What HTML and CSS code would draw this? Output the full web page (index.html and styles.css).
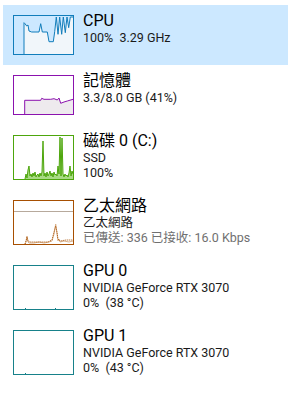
FILE: index.html
```html
<!DOCTYPE html>
<html>
<head>
    <title>Performance</title>
    <link rel="stylesheet" href="styles.css">
</head>
<body>
    <div class="list">
        <div class="item selected">
            <div class="graph cpu">
                <svg viewBox="0 0 59 38" preserveAspectRatio="none">
                    <polygon class="fill" points="10,38 10,6.7 11,7.7 12.7,10 14,9 15,15 17.7,16 25,16 26.7,7.7 28.3,16 33.3,16 35,25.7 39.3,25.7 40.7,15.7 42.3,1 44,18.3 45.7,1 47.7,18.3 49.3,1 51.3,16.7 53,1 54.7,11.7 56.3,1 59,1 59,38"/>
                    <polyline class="line" points="10,38 10,6.7 11,7.7 12.7,10 14,9 15,15 17.7,16 25,16 26.7,7.7 28.3,16 33.3,16 35,25.7 39.3,25.7 40.7,15.7 42.3,1 44,18.3 45.7,1 47.7,18.3 49.3,1 51.3,16.7 53,1 54.7,11.7 56.3,1 59,1"/>
                </svg>
            </div>
            <div class="info">
                <div class="title">CPU</div>
                <div class="sub">100%&nbsp; 3.29 GHz</div>
            </div>
        </div>

        <div class="item">
            <div class="graph mem">
                <svg viewBox="0 0 59 38" preserveAspectRatio="none">
                    <polygon class="fill" points="10.7,38 10.7,24.3 26.7,24.3 27.7,22.3 30,23.3 36.7,23.3 40,22.7 43.3,24 45,22 46.7,27.3 50,26 53.3,25 59,23.3 59,38"/>
                    <polyline class="line" points="10.7,38 10.7,24.3 26.7,24.3 27.7,22.3 30,23.3 36.7,23.3 40,22.7 43.3,24 45,22 46.7,27.3 50,26 53.3,25 59,23.3"/>
                </svg>
            </div>
            <div class="info">
                <div class="title">記憶體</div>
                <div class="sub">3.3/8.0 GB (41%)</div>
            </div>
        </div>

        <div class="item tall">
            <div class="graph disk">
                <svg viewBox="0 0 59 43" preserveAspectRatio="none">
                    <polygon class="fill" points="11,43 12,38 13,42 14,34 15,30 16,40 17,38 18,41 19,37 20,40 21,36 22,41 23,39 24,38 25,41 26,37 27,40 28,36 29,5 30,40 31,37 32,41 33,36 34,40 35,38 36,35 37,40 38,37 39,41 40,36 41,39 42,38 43,40 44,30 45,38 46,1 47,40 48,2 49,38 50,41 51,38 52,40 53,39 54,41 55,37 56,30 57,40 58,35 59,38 59,43"/>
                    <polyline class="line" points="11,43 12,38 13,42 14,34 15,30 16,40 17,38 18,41 19,37 20,40 21,36 22,41 23,39 24,38 25,41 26,37 27,40 28,36 29,5 30,40 31,37 32,41 33,36 34,40 35,38 36,35 37,40 38,37 39,41 40,36 41,39 42,38 43,40 44,30 45,38 46,1 47,40 48,2 49,38 50,41 51,38 52,40 53,39 54,41 55,37 56,30 57,40 58,35 59,38"/>
                </svg>
            </div>
            <div class="info">
                <div class="title">磁碟 0 (C:)</div>
                <div class="sub">SSD</div>
                <div class="sub">100%</div>
            </div>
        </div>

        <div class="item tall">
            <div class="graph net">
                <svg viewBox="0 0 59 43" preserveAspectRatio="none">
                    <line class="scale" x1="0" y1="10.5" x2="59" y2="10.5"/>
                    <polyline class="line" points="11,43 12,41 13,35 14,41 15,42 20,42 25,41 30,42 35,41 38,40 40,33 41.7,23 43,33 44,40 45,38 46,41 50,40 55,41 59,40"/>
                    <polyline class="dots" points="11,43 12,40 13,36 14,40 16,41 22,41 28,41 34,41 38,39 40,31 41.7,25 43,31 44,38 46,40 52,39 59,39"/>
                </svg>
            </div>
            <div class="info">
                <div class="title">乙太網路</div>
                <div class="sub">乙太網路</div>
                <div class="sub muted">已傳送: 336 已接收: 16.0 Kbps</div>
            </div>
        </div>

        <div class="item tall">
            <div class="graph gpu">
                <svg viewBox="0 0 59 43" preserveAspectRatio="none">
                    <line class="line" x1="11.5" y1="42" x2="11.5" y2="43"/>
                    <line class="line" x1="41.5" y1="42" x2="41.5" y2="43"/>
                </svg>
            </div>
            <div class="info">
                <div class="title">GPU 0</div>
                <div class="sub">NVIDIA GeForce RTX 3070</div>
                <div class="sub">0%&nbsp; (38 °C)</div>
            </div>
        </div>

        <div class="item tall">
            <div class="graph gpu">
                <svg viewBox="0 0 59 43" preserveAspectRatio="none">
                    <line class="line" x1="11.5" y1="42" x2="11.5" y2="43"/>
                </svg>
            </div>
            <div class="info">
                <div class="title">GPU 1</div>
                <div class="sub">NVIDIA GeForce RTX 3070</div>
                <div class="sub">0%&nbsp; (43 °C)</div>
            </div>
        </div>
    </div>
</body>
</html>
```
FILE: styles.css
```css
body { margin: 0; background: #fff; font-family: Roboto, "Noto Sans CJK TC", sans-serif; color: #1a1a1a; }
.list { padding: 5px 0 0 3px; }
.item { display: flex; align-items: flex-start; padding: 10px 0 10px 10px; }
.item.selected { background: #cce8ff; }
.graph { width: 59px; height: 38px; border: 1px solid; flex: none; }
.item.tall .graph { height: 43px; }
.graph svg { display: block; width: 100%; height: 100%; }
.line { fill: none; stroke-width: 1; vector-effect: non-scaling-stroke; }
.fill { stroke: none; }
.dots { fill: none; stroke-width: 1; stroke-dasharray: 1 1; vector-effect: non-scaling-stroke; }

.cpu { border-color: #117dbb; }
.cpu .line { stroke: #117dbb; }
.cpu .fill { fill: #f1f6fa; }
.mem { border-color: #8b12ae; }
.mem .line { stroke: #8b12ae; }
.mem .fill { fill: #eeeaee; }
.disk { border-color: #4da60c; }
.disk .line { stroke: #4da60c; }
.disk .fill { fill: #a9da84; }
.net { border-color: #a74f01; }
.net .line { stroke: #d9b08a; }
.net .dots { stroke: #a74f01; }
.net .scale { stroke: #b7a99c; stroke-width: 1; vector-effect: non-scaling-stroke; }
.gpu { border-color: #17818a; }
.gpu .line { stroke: #17818a; }

.info { margin-left: 9px; margin-top: -4px; }
.title { font-size: 16px; line-height: 19px; color: #000; }
.sub { font-size: 12.5px; line-height: 15px; }
.muted { color: #707070; }
```
